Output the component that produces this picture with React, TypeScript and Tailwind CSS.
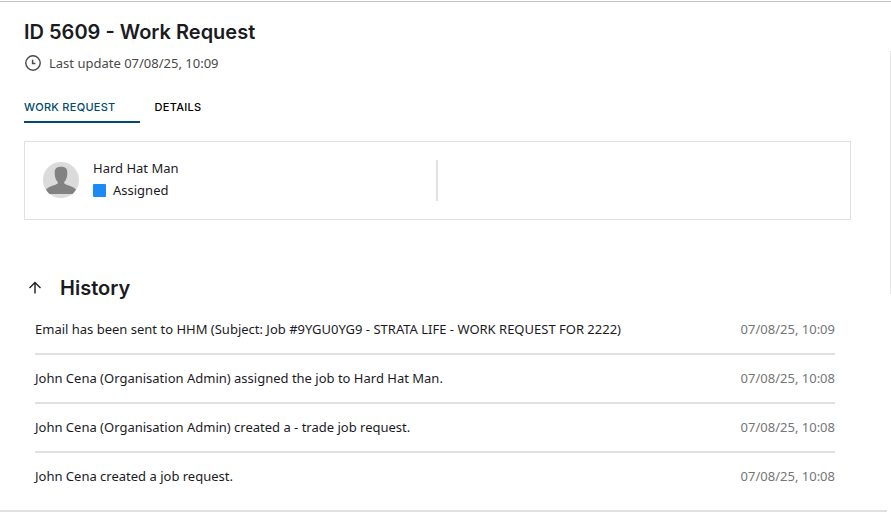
import { useState } from "react";
import clsx from "clsx";

const tabs = [
  { id: "request", label: "Work Request" },
  { id: "details", label: "Details" },
];

const history = [
  {
    text: "Email has been sent to HHM (Subject: Job #9YGU0YG9 - STRATA LIFE - WORK REQUEST FOR 2222)",
    date: "07/08/25, 10:09",
  },
  { text: "John Cena (Organisation Admin) assigned the job to Hard Hat Man.", date: "07/08/25, 10:08" },
  { text: "John Cena (Organisation Admin) created a - trade job request.", date: "07/08/25, 10:08" },
  { text: "John Cena created a job request.", date: "07/08/25, 10:08" },
];

function ClockIcon() {
  return (
    <svg className="size-[18px]" viewBox="0 0 18 18" fill="none" stroke="#4a4a4a" aria-hidden="true">
      <circle cx="9" cy="9" r="7.2" strokeWidth="1.4" />
      <path d="M8.6 5.8v3.7h2.8" strokeWidth="1.5" />
    </svg>
  );
}

function ArrowUpIcon() {
  return (
    <svg className="size-4" viewBox="0 0 16 16" fill="none" stroke="#202124" strokeWidth="1.4" aria-hidden="true">
      <path d="M8 13.5V3M2.5 8 8 2.5 13.5 8" />
    </svg>
  );
}

function Avatar() {
  return (
    <svg className="mt-0.5 size-9 shrink-0" viewBox="0 0 36 36" aria-hidden="true">
      <circle cx="18" cy="18" r="18" fill="#dbdbdb" />
      <path
        d="M18 4.800c-4.600 0-6.400 2-6.300 6 .1 4.200.7 7 3.100 9.200v1.600C12.500 23.300 6.500 24 3 27.600 4 29.500 5.200 31 6.500 32h23c1.300-1 2.500-2.500 3.500-4.400-3.500-3.600-9.500-4.300-11.800-6V20c2.400-2.200 3-5 3.100-9.200.1-4-1.700-6-6.300-6Z"
        fill="#828282"
      />
    </svg>
  );
}

function Assignee() {
  return (
    <section className="mt-[18px] grid grid-cols-2 border border-[#e0e0e0] py-[18px]">
      <div className="flex items-start gap-[14px] border-r-2 border-[#e0e0e0] pl-[18px]">
        <Avatar />
        <div className="flex flex-col gap-[5px] pb-0.5 leading-[17px]">
          <p>Hard Hat Man</p>
          <p className="flex items-center gap-[7px]">
            <span className="size-[13px] rounded-[1px] bg-[#1c8af5]" />
            Assigned
          </p>
        </div>
      </div>
    </section>
  );
}

function History() {
  const [open, setOpen] = useState(true);

  return (
    <section className="mt-[54px]">
      <h2 className="font-['Inter',sans-serif] text-xl font-semibold leading-7">
        <button
          type="button"
          aria-expanded={open}
          onClick={() => setOpen(!open)}
          className="flex items-center gap-[17px] pl-[3px]"
        >
          <ArrowUpIcon />
          History
        </button>
      </h2>
      {open && (
        <ul className="mt-1 ml-[11px] mr-4">
          {history.map((item) => (
            <li
              key={item.text}
              className="flex justify-between gap-4 border-b-2 border-[#e0e0e0] py-[13px] leading-[21px] last:border-b-0"
            >
              <span>{item.text}</span>
              <time className="shrink-0 text-[#757575]">{item.date}</time>
            </li>
          ))}
        </ul>
      )}
    </section>
  );
}

export default function App() {
  const [active, setActive] = useState("request");

  return (
    <div className="mt-px flex items-start border-t border-[#c4c4c4] bg-white font-['Noto_Sans',sans-serif] text-[13px] text-[#1b1b1f]">
      <main className="mr-[3px] min-w-0 flex-1 border-b-2 border-[#e0e0e0] pt-4 pr-9 pb-[10px] pl-6">
        <h1 className="font-['Inter',sans-serif] text-xl font-semibold leading-7">ID 5609 - Work Request</h1>
        <p className="mt-[7px] flex items-center gap-[7px] leading-5 text-[#4a4a4a]">
          <ClockIcon />
          Last update 07/08/25, 10:09
        </p>

        <div role="tablist" className="mt-[22px] flex gap-[15px] font-['Inter',sans-serif] text-[11px] font-medium">
          {tabs.map((tab) => (
            <button
              key={tab.id}
              type="button"
              role="tab"
              aria-selected={active === tab.id}
              onClick={() => setActive(tab.id)}
              className={clsx(
                "border-b-2 pt-1 pr-6 pb-[6px] leading-4 tracking-wide uppercase",
                active === tab.id ? "border-[#004b6f] text-[#004b6f]" : "border-transparent text-black",
              )}
            >
              {tab.label}
            </button>
          ))}
        </div>

        <Assignee />
        <History />
      </main>
      <div className="mt-[49px] h-[243px] w-px bg-[#e4e4e4]" />
    </div>
  );
}
